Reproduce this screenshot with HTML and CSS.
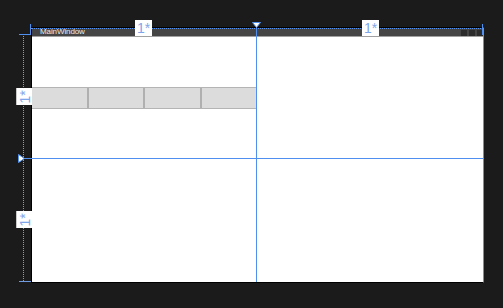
FILE: index.html
```html
<!DOCTYPE html>
<html lang="en">
<head>
    <meta charset="UTF-8">
    <title>MainWindow - Designer</title>
    <link rel="stylesheet" href="styles.css">
</head>
<body>
    <div class="stage">
        <div class="window">
            <div class="titlebar">
                <span class="title">MainWindow</span>
                <div class="caption-buttons">
                    <span></span><span></span><span></span>
                </div>
            </div>
            <div class="content">
                <div class="cell">
                    <div class="toolbar">
                        <div class="tool"></div>
                        <div class="tool"></div>
                        <div class="tool"></div>
                        <div class="tool"></div>
                    </div>
                </div>
                <div class="cell"></div>
                <div class="cell"></div>
                <div class="cell"></div>
            </div>
        </div>

        <!-- grid adorners -->
        <div class="rail-top"></div>
        <div class="rail-left"></div>
        <div class="corner-v"></div>
        <div class="corner-h"></div>
        <div class="end-v"></div>
        <div class="end-h"></div>
        <div class="split-v"></div>
        <div class="split-h"></div>

        <svg class="marker-top" width="9" height="6" viewBox="0 0 9 6">
            <path d="M0.5 0.5 H8.5 L4.5 5.5 Z" fill="#fff" stroke="#4f8ff0"/>
        </svg>
        <svg class="marker-left" width="7" height="9" viewBox="0 0 7 9">
            <path d="M0.5 0.5 V8.5 L6.5 4.5 Z" fill="#fff" stroke="#4f8ff0"/>
        </svg>

        <div class="size col-1">1*</div>
        <div class="size col-2">1*</div>
        <div class="size row-1"><span>1*</span></div>
        <div class="size row-2"><span>1*</span></div>
    </div>
</body>
</html>
```

FILE: styles.css
```css
* {
    margin: 0;
    padding: 0;
    box-sizing: border-box;
}
html, body {
    height: 100%;
}
body {
    background-color: #1b1b1b;
    font-family: "Liberation Sans", Arial, sans-serif;
    overflow: hidden;
}
.stage {
    position: relative;
    width: 503px;
    height: 308px;
    padding: 27px 0 0 31px;
}
.window {
    width: 453px;
    height: 256px;
    border: 1px solid #000;
    border-right-color: #8c8c8c;
    display: flex;
    flex-direction: column;
}
.titlebar {
    height: 9px;
    background-color: #454545;
    border-bottom: 1px solid #a0a0a0;
    display: flex;
    align-items: center;
    justify-content: space-between;
    padding-left: 8px;
}
.title {
    color: #ececec;
    font-size: 8px;
    line-height: 8px;
    letter-spacing: -0.1px;
}
.caption-buttons {
    display: flex;
    gap: 2px;
    padding-top: 1px;
}
.caption-buttons span {
    width: 6px;
    height: 6px;
    background-color: #2c2c2c;
}
.content {
    flex: 1;
    background-color: #fff;
    display: grid;
    grid-template-columns: 224px 1fr;
    grid-template-rows: 121px 1fr;
}
.toolbar {
    margin-top: 50px;
    height: 22px;
    width: 225px;
    display: flex;
    background-color: #dcdcdc;
    border: 1px solid #b4b4b4;
    border-left: none;
}
.tool {
    flex: 1;
}
.tool + .tool {
    border-left: 2px solid #b0b0b0;
}

/* adorners laid over the design surface */
.rail-top, .rail-left, .corner-v, .corner-h, .end-v, .end-h,
.split-v, .split-h, .marker-top, .marker-left, .size {
    position: absolute;
}
.rail-top {
    left: 31px;
    top: 28px;
    width: 452px;
    border-top: 1px dotted #5a93ee;
}
.rail-left {
    left: 23px;
    top: 36px;
    height: 245px;
    border-left: 1px dotted #7a9ed8;
}
.corner-v {
    left: 30px;
    top: 24px;
    width: 1px;
    height: 11px;
    background-color: #4f8ff0;
}
.corner-h {
    left: 19px;
    top: 34px;
    width: 12px;
    height: 1px;
    background-color: #4f8ff0;
}
.end-v {
    left: 482px;
    top: 24px;
    width: 1px;
    height: 11px;
    background-color: #4f8ff0;
}
.end-h {
    left: 19px;
    top: 281px;
    width: 12px;
    height: 1px;
    background-color: #6f9ae0;
}
.split-v {
    left: 256px;
    top: 27px;
    width: 1px;
    height: 255px;
    background-color: #4f8ff0;
}
.split-h {
    left: 24px;
    top: 158px;
    width: 459px;
    height: 1px;
    background-color: #4f8ff0;
}
.marker-top {
    left: 252px;
    top: 22px;
}
.marker-left {
    left: 18px;
    top: 154px;
}
.size {
    background-color: #fff;
    color: #7ea6ea;
    font-size: 14px;
    line-height: 16px;
    text-align: center;
}
.col-1 {
    left: 135px;
    top: 20px;
    width: 17px;
    height: 16px;
}
.col-2 {
    left: 362px;
    top: 20px;
    width: 17px;
    height: 16px;
}
.row-1, .row-2 {
    left: 17px;
    width: 15px;
    height: 17px;
    display: flex;
    align-items: center;
    justify-content: center;
    box-shadow: -1px 0 0 #c8c8c8;
}
.row-1 {
    top: 88px;
}
.row-2 {
    top: 211px;
}
.size span {
    display: block;
    transform: rotate(-90deg);
}
```
